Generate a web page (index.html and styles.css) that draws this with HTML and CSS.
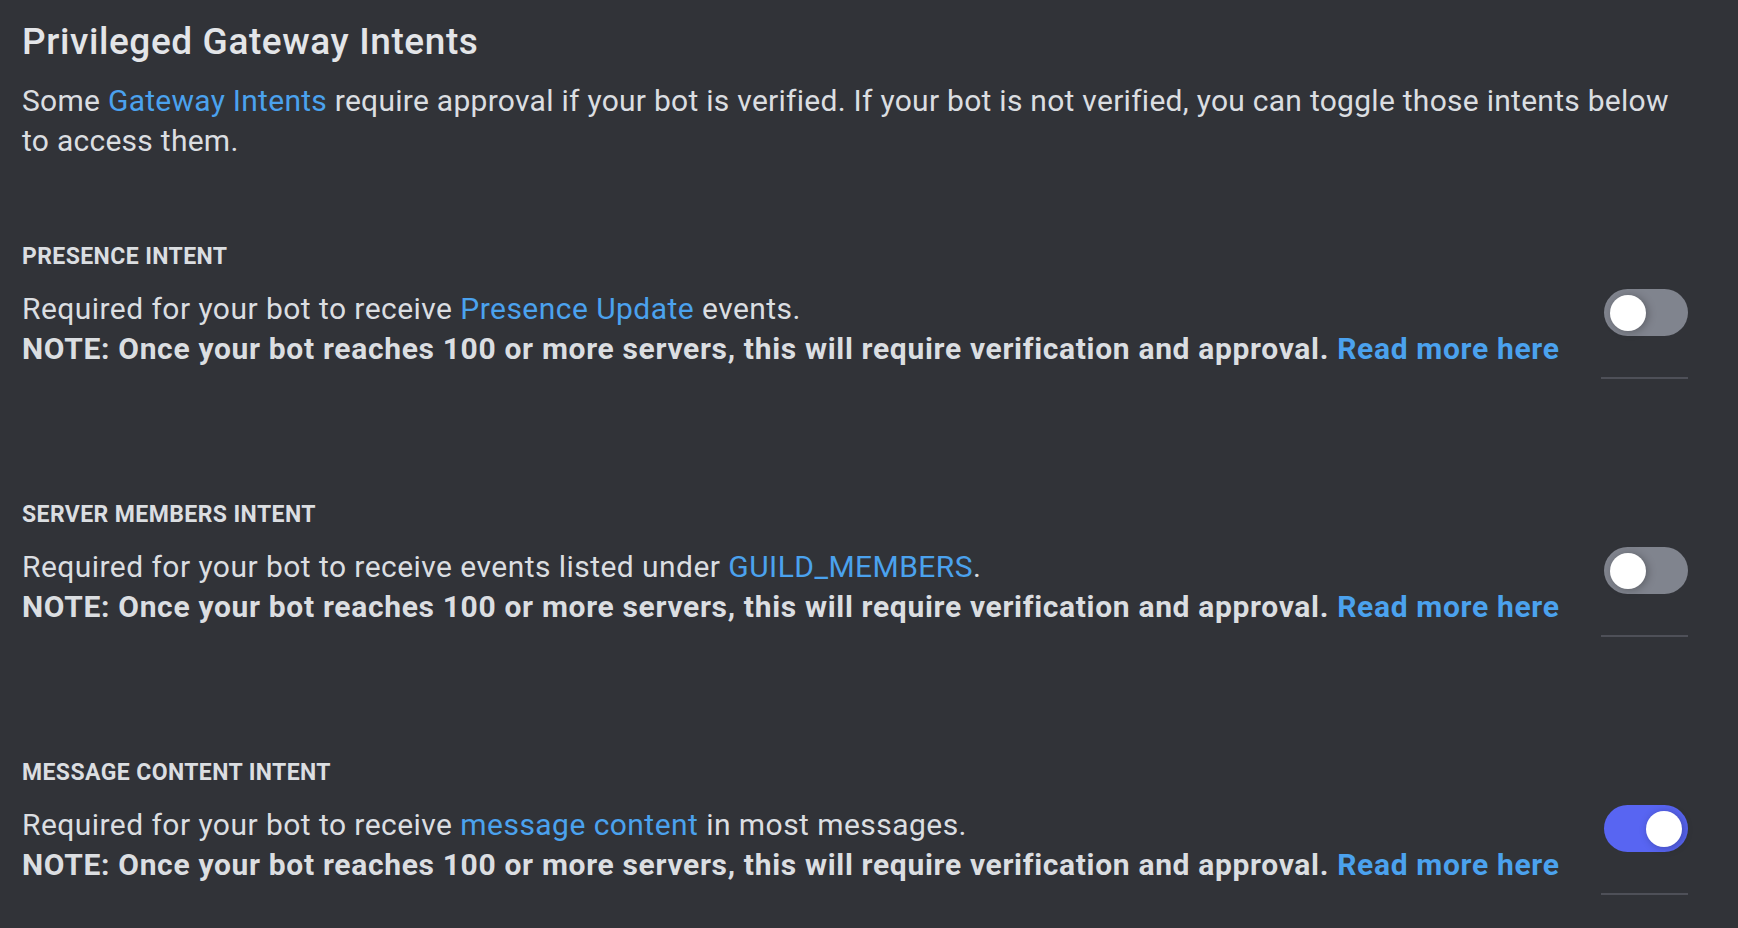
FILE: index.html
```html
<!DOCTYPE html>
<html lang="en">
<head>
<meta charset="utf-8">
<title>Privileged Gateway Intents</title>
<link rel="stylesheet" href="styles.css">
</head>
<body>
<main class="page">
  <h1 class="title">Privileged Gateway Intents</h1>
  <p class="desc">Some <a class="link" href="#">Gateway Intents</a> require approval if your bot is verified. If your bot is not verified, you can toggle those intents below to access them.</p>

  <section class="intent">
    <h2 class="intent-head">PRESENCE INTENT</h2>
    <div class="intent-row">
      <div class="intent-text">
        <div class="lead">Required for your bot to receive <a class="link" href="#">Presence Update</a> events.</div>
        <div class="note">NOTE: Once your bot reaches 100 or more servers, this will require verification and approval. <a class="link" href="#">Read more here</a></div>
      </div>
      <div class="toggle-col">
        <div class="toggle"><span class="knob"></span></div>
        <div class="divider"></div>
      </div>
    </div>
  </section>

  <section class="intent">
    <h2 class="intent-head">SERVER MEMBERS INTENT</h2>
    <div class="intent-row">
      <div class="intent-text">
        <div class="lead">Required for your bot to receive events listed under <a class="link" href="#">GUILD_MEMBERS</a>.</div>
        <div class="note">NOTE: Once your bot reaches 100 or more servers, this will require verification and approval. <a class="link" href="#">Read more here</a></div>
      </div>
      <div class="toggle-col">
        <div class="toggle"><span class="knob"></span></div>
        <div class="divider"></div>
      </div>
    </div>
  </section>

  <section class="intent">
    <h2 class="intent-head">MESSAGE CONTENT INTENT</h2>
    <div class="intent-row">
      <div class="intent-text">
        <div class="lead">Required for your bot to receive <a class="link" href="#">message content</a> in most messages.</div>
        <div class="note">NOTE: Once your bot reaches 100 or more servers, this will require verification and approval. <a class="link" href="#">Read more here</a></div>
      </div>
      <div class="toggle-col">
        <div class="toggle on"><span class="knob"></span></div>
        <div class="divider"></div>
      </div>
    </div>
  </section>
</main>
</body>
</html>
```

FILE: styles.css
```css
html, body {
  margin: 0;
  padding: 0;
  background: #313338;
}

body {
  font-family: Roboto, "Noto Sans", sans-serif;
  color: #dbdee1;
  height: 928px;
  overflow: hidden;
}

.page {
  padding: 20px 50px 0 22px;
}

.title {
  margin: 0;
  font-size: 37px;
  line-height: 44px;
  font-weight: 500;
  letter-spacing: 0.6px;
  color: #e3e5e8;
}

.desc {
  margin: 17px 0 0;
  font-size: 30px;
  line-height: 40px;
  letter-spacing: 0.27px;
}

.link {
  color: #4ba2ee;
  text-decoration: none;
}

.intent {
  margin-top: 82px;
}

.intent + .intent {
  margin-top: 122px;
}

.intent-head {
  margin: 0;
  font-size: 23px;
  line-height: 28px;
  font-weight: 700;
  letter-spacing: 0.4px;
  color: #dbdee1;
}

.intent-row {
  display: flex;
  margin-top: 18px;
  gap: 30px;
}

.intent-text {
  flex: 1;
  font-size: 30px;
  line-height: 40px;
  white-space: nowrap;
}

.lead {
  letter-spacing: 0.45px;
}

.note {
  font-weight: 700;
  letter-spacing: 0.67px;
}

.toggle-col {
  width: 87px;
  display: flex;
  flex-direction: column;
  align-items: flex-end;
}

.toggle {
  position: relative;
  width: 84px;
  height: 47px;
  border-radius: 24px;
  background: #80848e;
}

.toggle.on {
  background: #5865f2;
}

.knob {
  position: absolute;
  top: 6px;
  left: 6px;
  width: 36px;
  height: 36px;
  border-radius: 50%;
  background: #ffffff;
  box-shadow: 2px 1px 8px rgba(0, 0, 0, 0.28);
}

.toggle.on .knob {
  left: auto;
  right: 6px;
}

.divider {
  width: 87px;
  height: 2px;
  margin-top: 41px;
  background: #4e5058;
}
```
